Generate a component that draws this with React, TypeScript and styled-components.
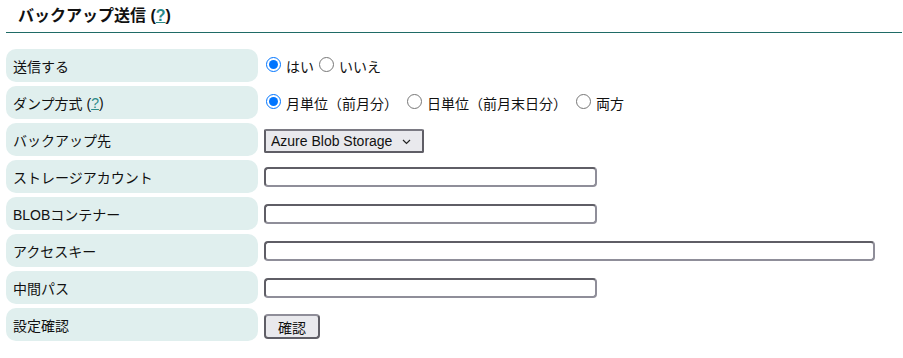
import React from "react";
import styled, { createGlobalStyle } from "styled-components";

const Global = createGlobalStyle`
  html, body {
    margin: 0;
    padding: 0;
    background: #ffffff;
  }
  body {
    font-family: "Liberation Sans", "Noto Sans CJK JP", Arial, sans-serif;
    font-size: 14px;
    color: #111111;
  }
`;

const Page = styled.div`
  padding: 0 1px 0 6px;
`;

const Heading = styled.h2`
  margin: 0;
  padding: 4px 0 4px 12px;
  font-size: 16px;
  line-height: 24px;
  font-weight: bold;
  color: #111111;
  border-bottom: 1px solid #1f6b66;
`;

const HelpLink = styled.a`
  color: #2b8a88;
  text-decoration: underline;
`;

const Form = styled.div`
  display: flex;
  flex-direction: column;
  gap: 4px;
  margin-top: 16px;
`;

const Row = styled.div`
  display: grid;
  grid-template-columns: 252px 1fr;
  column-gap: 6px;
  height: 33px;
`;

const Label = styled.div`
  display: flex;
  align-items: center;
  padding-left: 7px;
  background: #e0efee;
  border-radius: 10px;
  font-size: 14px;
`;

const Value = styled.div`
  display: flex;
  align-items: center;
`;

const RadioGroup = styled.div<{ $gap: number }>`
  display: flex;
  align-items: center;
  gap: ${(p) => p.$gap}px;
`;

const Option = styled.label`
  display: inline-flex;
  align-items: center;
  font-size: 14px;
`;

const Radio = styled.input.attrs({ type: "radio" })`
  width: 15px;
  height: 15px;
  margin: 0 5px 3px 2px;
`;

const TextInput = styled.input.attrs({ type: "text" })<{ $width: number }>`
  box-sizing: border-box;
  width: ${(p) => p.$width}px;
  height: 20px;
  margin: 0;
  padding: 0 4px;
  border: 2px solid;
  border-color: #5f5e66 #8f8e99 #8f8e99 #5f5e66;
  border-radius: 4px;
  background: #ffffff;
  font-size: 14px;
`;

const SelectWrap = styled.div`
  position: relative;
  display: inline-block;
  margin-top: 3px;
`;

const Select = styled.select`
  appearance: none;
  box-sizing: border-box;
  width: 160px;
  height: 24px;
  margin: 0;
  padding: 0 20px 0 5px;
  border: 2px solid;
  border-color: #7a7982 #5f5e66 #5f5e66 #5f5e66;
  border-radius: 2px;
  background: #e9e9ed;
  font-family: "Liberation Sans", Arial, sans-serif;
  font-size: 14px;
  color: #111111;
`;

const Chevron = styled.svg`
  position: absolute;
  right: 13px;
  top: 10px;
  pointer-events: none;
`;

const Button = styled.button`
  box-sizing: border-box;
  width: 56px;
  height: 25px;
  margin: 4px 0 0 0;
  padding: 0;
  border: 2px solid;
  border-color: #8f8e99 #5f5e66 #5f5e66 #5f5e66;
  border-radius: 4px;
  background: #e9e9ed;
  font-family: "Liberation Sans", "Noto Sans CJK JP", sans-serif;
  font-size: 14px;
  color: #111111;
`;

export default function App() {
  return (
    <>
      <Global />
      <Page>
        <Heading>
          バックアップ送信 (<HelpLink href="#">?</HelpLink>)
        </Heading>
        <Form>
          <Row>
            <Label>送信する</Label>
            <Value>
              <RadioGroup $gap={3}>
                <Option>
                  <Radio name="send" defaultChecked />
                  はい
                </Option>
                <Option>
                  <Radio name="send" />
                  いいえ
                </Option>
              </RadioGroup>
            </Value>
          </Row>
          <Row>
            <Label>
              ダンプ方式&nbsp;(<HelpLink href="#">?</HelpLink>)
            </Label>
            <Value>
              <RadioGroup $gap={7}>
                <Option>
                  <Radio name="dump" defaultChecked />
                  月単位（前月分）
                </Option>
                <Option>
                  <Radio name="dump" />
                  日単位（前月末日分）
                </Option>
                <Option>
                  <Radio name="dump" />
                  両方
                </Option>
              </RadioGroup>
            </Value>
          </Row>
          <Row>
            <Label>バックアップ先</Label>
            <Value>
              <SelectWrap>
                <Select defaultValue="azure">
                  <option value="azure">Azure Blob Storage</option>
                </Select>
                <Chevron width="9" height="6" viewBox="0 0 9 6">
                  <path d="M1 1 L4.5 4.5 L8 1" fill="none" stroke="#222" strokeWidth="1.2" />
                </Chevron>
              </SelectWrap>
            </Value>
          </Row>
          <Row>
            <Label>ストレージアカウント</Label>
            <Value>
              <TextInput $width={333} />
            </Value>
          </Row>
          <Row>
            <Label>BLOBコンテナー</Label>
            <Value>
              <TextInput $width={333} />
            </Value>
          </Row>
          <Row>
            <Label>アクセスキー</Label>
            <Value>
              <TextInput $width={611} />
            </Value>
          </Row>
          <Row>
            <Label>中間パス</Label>
            <Value>
              <TextInput $width={333} />
            </Value>
          </Row>
          <Row>
            <Label>設定確認</Label>
            <Value>
              <Button type="button">確認</Button>
            </Value>
          </Row>
        </Form>
      </Page>
    </>
  );
}
